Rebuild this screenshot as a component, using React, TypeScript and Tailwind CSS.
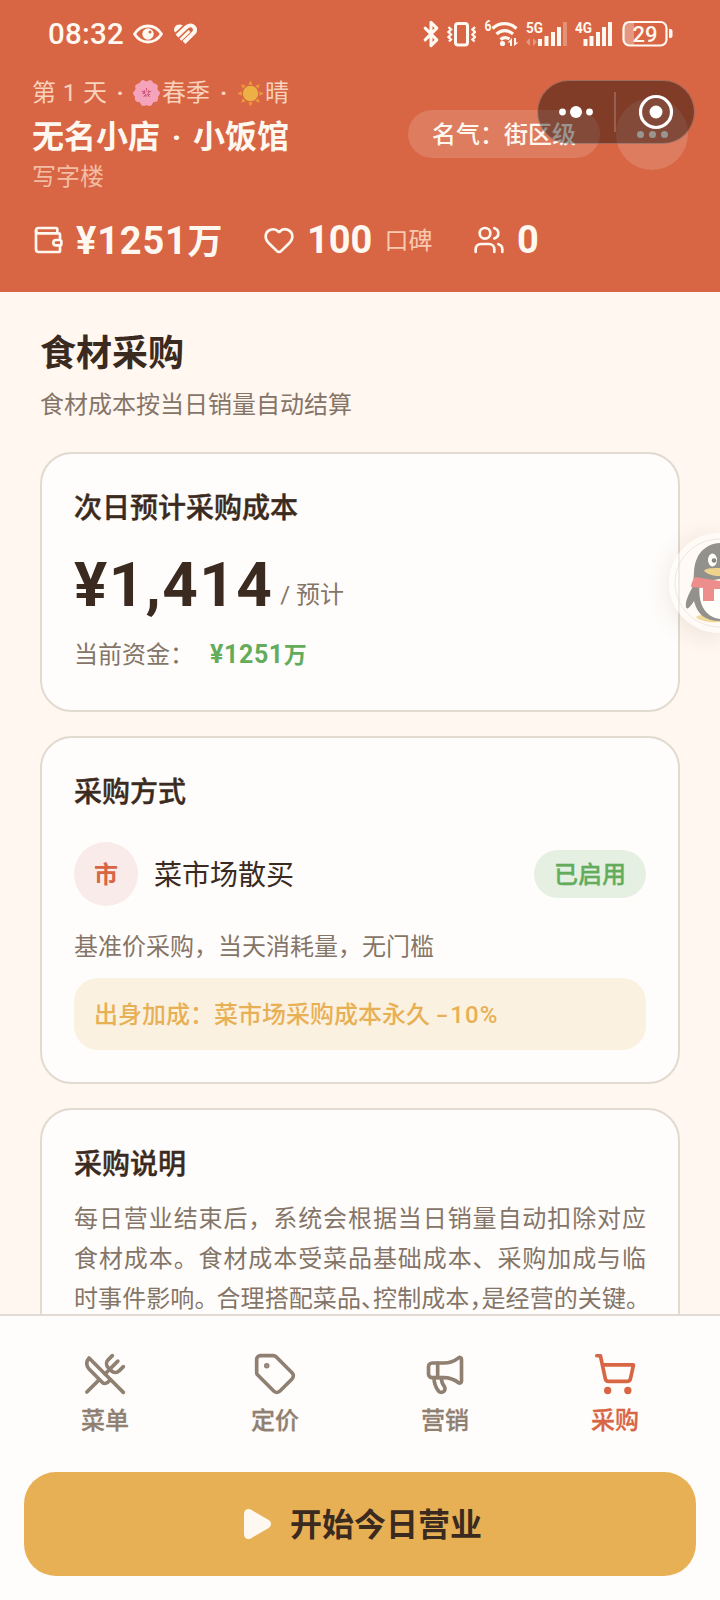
import type { ReactNode } from 'react';
import {
  Bluetooth,
  Heart,
  Megaphone,
  Play,
  ShoppingCart,
  Tag,
  Users,
  UtensilsCrossed,
  Wallet,
} from 'lucide-react';

function StatusBar() {
  return (
    <div className="flex h-[68px] items-center justify-between pl-12 pr-[46px] text-[#fff8f0]">
      <div className="flex items-center">
        <span className="w-[76px] whitespace-nowrap pt-px text-[29.5px] font-medium leading-none tracking-[0.2px]">08:32</span>
        <svg className="ml-2 h-6 w-[32px]" viewBox="0 0 32 24" fill="none">
          <path d="M2.5 12C6 6.5 10.5 4 16 4s10 2.500 13.500 8C26 17.500 21.500 20 16 20S6 17.500 2.500 12Z" stroke="currentColor" strokeWidth="2.800" strokeLinejoin="round" />
          <circle cx="16" cy="12" r="5.700" fill="currentColor" />
          <circle cx="18" cy="10" r="1.500" fill="#d86543" />
        </svg>
        <svg className="ml-2 h-6 w-[26px]" viewBox="0 0 26 24" fill="none" stroke="currentColor" strokeWidth="4">
          <path d="M2.200 9C1.500 6 3.500 2.500 7.500 2.500c1.300 0 2.400.4 3.300 1L3.300 10.500Z" fill="currentColor" stroke="none" />
          <path d="m5 14 9-8.500c3-2.800 6-2.500 7.800-.7 1.900 1.900 1.600 4.500-.3 6.400L12 20.500" />
          <path d="m8.500 17.800 9-8.800" strokeWidth="3" />
        </svg>
      </div>
      <div className="flex items-center">
        <Bluetooth className="-mr-px h-[30px] w-7 -translate-x-px" strokeWidth={2.600} />
        <svg className="ml-[1px] h-8 w-[30px]" viewBox="446 18 30 32" fill="none" stroke="currentColor" strokeWidth="2.400">
          <rect x="455.500" y="23.500" width="12" height="21.500" rx="2.500" strokeWidth="3" />
          <path d="m448.500 27 2.500 2.500-2.500 2.500 2.500 2.500-2.500 2.500 2.500 2.500-2 2M475 27l-2.500 2.500 2.500 2.500-2.500 2.500 2.500 2.500-2.500 2.500 2 2" />
        </svg>
        <svg className="ml-2 h-8 w-[35px]" viewBox="484 18 35 32" fill="none" stroke="currentColor" strokeWidth="3.200">
          <text x="484.500" y="31" fontSize="14" fontWeight="700" textLength="7" lengthAdjust="spacingAndGlyphs" fill="currentColor" stroke="none">6</text>
          <path d="M492.500 28.500c7-6.500 17-6.500 24 0M496.500 34c5-4.500 11.500-4.500 16.500 0M500.500 39.500c3-2.500 6-2.500 9-.5" />
          <circle cx="502.500" cy="43.500" r="2.600" fill="currentColor" stroke="none" />
          <path d="m512 38-4.500 4.500H510V46h2ZM514 38v8l4.500-3.500H516V38Z" fill="currentColor" stroke="none" />
        </svg>
        <svg className="ml-[7px] h-8 w-[42px]" viewBox="526 18 42 32" fill="currentColor">
          <text x="526" y="33" fontSize="15.500" fontWeight="700" textLength="17" lengthAdjust="spacingAndGlyphs">5G</text>
          <path opacity=".35" d="m530 38-4 4 4 4Zm3 0v8l4-4Z" />
          <path d="M538 39h4v7h-4ZM544.500 36h4v10h-4ZM551 32h4v14h-4ZM557 27h4v19h-4Z" />
          <path opacity=".3" d="M563 22h4v24h-4Z" />
        </svg>
        <svg className="ml-[7px] h-8 w-[38px]" viewBox="575 18 38 32" fill="currentColor">
          <text x="575" y="33" fontSize="15.500" fontWeight="700" textLength="17" lengthAdjust="spacingAndGlyphs">4G</text>
          <path d="M583.500 39h4v7h-4ZM589.500 36h4v10h-4ZM596 32h4v14h-4ZM602 27h4v19h-4ZM608 22h4v24h-4Z" />
        </svg>
        <svg className="ml-[8px] h-8 w-[53px]" viewBox="621 18 53 32" fill="none">
          <path d="M624 22h10v23h-8l-2-2Z" fill="currentColor" opacity=".35" />
          <rect x="623.500" y="22" width="43" height="23.500" rx="6" stroke="currentColor" strokeWidth="2.200" />
          <path d="M669 29h1.500q2 0 2 2v5q0 2-2 2H669Z" fill="currentColor" />
          <text x="645" y="41.500" fontSize="22" fontWeight="500" textAnchor="middle" textLength="25" fill="currentColor">29</text>
        </svg>
      </div>
    </div>
  );
}

function Blossom() {
  return (
    <svg className="h-[28px] w-[27px]" viewBox="-14 -14 28 28">
      {[0, 72, 144, 216, 288].map((angle) => (
        <g key={angle} transform={`rotate(${angle})`}>
          <path d="M0 0C-10-4-9-12-3.500-13.500L0-12l3.500-1.500C9-12 10-4 0 0Z" fill="#f4a3bb" />
          <path d="M0-1V-5M0-1l-2-2.500M0-1l2-2.500" stroke="#b8345c" strokeWidth=".8" />
        </g>
      ))}
      <circle r="1.500" fill="#f4a3bb" />
    </svg>
  );
}

function Sun() {
  return (
    <svg className="h-[27px] w-[27px]" viewBox="-14 -14 28 28">
      {[0, 45, 90, 135, 180, 225, 270, 315].map((angle) => (
        <path key={angle} d="m-2.300-9.200 2.300-4.400 2.300 4.400Z" fill="#ee9a3a" transform={`rotate(${angle})`} />
      ))}
      <circle r="8" fill="#ecb044" />
    </svg>
  );
}

function Header() {
  return (
    <header className="relative h-[292px] shrink-0 bg-[#d86543] text-[#fff8f0]">
      <StatusBar />
      <div className="flex items-start justify-between pl-8 pr-8">
        <div className="pt-[7px]">
          <div className="flex h-9 items-center whitespace-pre text-2xl text-[#f9d2bd]">
            <span className="flex w-[75px] justify-between"><span>第</span><span>1</span><span>天</span></span>
            <span className="w-[26px] text-center font-bold">·</span>
            <Blossom />
            <span className="ml-[2px]">春季</span>
            <span className="w-[27px] text-center font-bold">·</span>
            <Sun />
            <span className="ml-[1px]">晴</span>
          </div>
          <h1 className="flex h-[52px] items-center whitespace-pre text-[32px] font-bold">
            无名小店<span className="w-[33px] text-center">·</span>小饭馆
          </h1>
          <div className="flex h-7 items-center text-2xl text-[#f3bda5]">写字楼</div>
        </div>
        <div className="flex items-center gap-4 pt-[30px]">
          <div className="flex h-12 w-[192px] items-center rounded-full bg-white/15 pl-6 pt-0.5 text-2xl font-medium">名气：街区级</div>
          <div className="flex h-[72px] w-[72px] items-center justify-center gap-[5px] rounded-full bg-white/15">
            <i className="h-[7px] w-[7px] rounded-full bg-[#fff8f0]" />
            <i className="h-[7px] w-[7px] rounded-full bg-[#fff8f0]" />
            <i className="h-[7px] w-[7px] rounded-full bg-[#fff8f0]" />
          </div>
        </div>
      </div>
      <div className="mt-[21px] flex h-14 items-center pl-8 text-[38px] font-bold leading-none">
        <div className="flex w-[231px] items-center">
          <Wallet className="h-8 w-8" strokeWidth={2} />
          <span className="ml-3 whitespace-nowrap pt-px tracking-[0.8px]">¥1251<span className="text-[35px]">万</span></span>
        </div>
        <div className="flex w-[210px] items-center">
          <Heart className="h-8 w-8" strokeWidth={2} />
          <span className="ml-3">100</span>
          <span className="ml-3 pt-0.5 text-2xl font-normal text-[#f9c9b1]">口碑</span>
        </div>
        <div className="flex items-center">
          <Users className="h-8 w-8" strokeWidth={2} />
          <span className="ml-3">0</span>
        </div>
      </div>
      <div className="absolute left-[537px] top-[80px] flex h-[64px] w-[158px] items-center rounded-full border border-white/25 bg-black/40">
        <svg className="h-full w-full" viewBox="538 81 156 62" fill="none">
          <circle cx="562.500" cy="112" r="3.400" fill="#fff" />
          <circle cx="576" cy="112" r="6" fill="#fff" />
          <circle cx="589.500" cy="112" r="3.400" fill="#fff" />
          <path d="M615 92v40" stroke="#fff" strokeOpacity=".25" strokeWidth="1.500" />
          <circle cx="656" cy="112" r="15.500" stroke="#fff" strokeWidth="3.200" />
          <circle cx="656" cy="112" r="6.500" fill="#fff" />
        </svg>
      </div>
    </header>
  );
}

function Card({ title, children }: { title: string; children: ReactNode }) {
  return (
    <section className="rounded-[32px] border-2 border-[#e0dad1] bg-[#fffdfb] p-8">
      <h3 className="h-[42px] pt-0.5 text-[28px] font-medium leading-[42px] text-[#3b2a20] [-webkit-text-stroke:0.4px_currentColor]">{title}</h3>
      {children}
    </section>
  );
}

function Content() {
  return (
    <main className="min-h-0 flex-1 overflow-hidden px-10 pt-[35px]">
      <h2 className="text-[36px] font-bold leading-[54px] text-[#3b2a20]">食材采购</h2>
      <p className="mt-[6px] text-2xl leading-9 text-[#857568]">食材成本按当日销量自动结算</p>
      <div className="mt-[29px] flex flex-col gap-6">
        <Card title="次日预计采购成本">
          <div className="flex h-[102px] items-baseline pt-[21px]">
            <span className="text-[62px] font-bold leading-[72px] tracking-[1.400px] text-[#3b2a20]">¥1,414</span>
            <span className="relative -top-[3px] ml-[7px] whitespace-pre text-2xl text-[#857568]">/ 预计</span>
          </div>
          <div className="flex h-12 items-center pt-0.5 text-2xl text-[#857568]">
            <span className="w-[136px]">当前资金：</span>
            <span className="text-[25px] font-bold tracking-[0.600px] text-[#63ac5b]">¥1251<span className="text-[23px]">万</span></span>
          </div>
        </Card>
        <Card title="采购方式">
          <div className="mt-[30px] flex h-16 items-center">
            <div className="flex h-16 w-16 items-center justify-center rounded-full bg-[#f9ebe9] pt-0.5 text-2xl font-bold text-[#d86543]">市</div>
            <span className="ml-4 pt-[3px] text-[28px] text-[#3b2a20]">菜市场散买</span>
            <span className="ml-auto flex h-12 w-28 items-center justify-center rounded-3xl bg-[#e5f0e2] pt-0.5 text-2xl font-medium text-[#63ac5b] [-webkit-text-stroke:0.3px_currentColor]">已启用</span>
          </div>
          <p className="mt-[23px] text-2xl leading-9 text-[#857568]">基准价采购，当天消耗量，无门槛</p>
          <div className="mt-[13px] flex h-[72px] items-center rounded-3xl bg-[#fbf1e1] pl-5 pt-0.5 text-2xl font-medium text-[#e8b054]">
            <span className="whitespace-pre">出身加成：菜市场采购成本永久 </span>
            <span className="tracking-[1.1px]"><span className="mr-px inline-block origin-left scale-x-150 pr-1">-</span>10%</span>
          </div>
        </Card>
        <Card title="采购说明">
          <div className="mt-[15px] text-2xl leading-10 text-[#857568]">
            <p className="whitespace-nowrap [text-align-last:justify]">每日营业结束后，系统会根据当日销量自动扣除对应</p>
            <p className="whitespace-nowrap [text-align-last:justify]">食材成本。食材成本受菜品基础成本、采购加成与临</p>
            <p className="whitespace-nowrap tracking-[0.08px]">
              时事件影响<span className="-mr-0.5">。</span>合理搭配菜品<span className="[font-feature-settings:'halt']">、</span>控制成本<span className="[font-feature-settings:'halt']">，</span>是经营的关键。
            </p>
          </div>
        </Card>
      </div>
    </main>
  );
}

const tabs = [
  { label: '菜单', Icon: UtensilsCrossed, active: false },
  { label: '定价', Icon: Tag, active: false },
  { label: '营销', Icon: Megaphone, active: false },
  { label: '采购', Icon: ShoppingCart, active: true },
];

function BottomBar() {
  return (
    <footer className="flex h-[286px] shrink-0 flex-col border-t-2 border-[#e3dad3] bg-[#fffdfc]">
      <nav className="grid grid-cols-4 px-5 pt-9">
        {tabs.map(({ label, Icon, active }) => (
          <div key={label} className={`flex flex-col items-center ${active ? 'text-[#d86543]' : 'text-[#8f8071]'}`}>
            <Icon className="h-11 w-11" strokeWidth={2} />
            <span className="mt-[7px] text-2xl font-medium leading-9 [-webkit-text-stroke:0.3px_currentColor]">{label}</span>
          </div>
        ))}
      </nav>
      <button className="mx-6 mt-[33px] flex h-[104px] items-center justify-center gap-4 rounded-[32px] bg-[#e8b054] text-[32px] font-bold text-[#3b2a20]">
        <Play className="h-9 w-9" fill="#fff8f0" stroke="#fff8f0" strokeWidth={2} />
        <span className="pt-0.5">开始今日营业</span>
      </button>
    </footer>
  );
}

function FloatingPenguin() {
  return (
    <div className="absolute left-[669px] top-[533px] h-[100px] w-[51px] rounded-l-full bg-[#fffefa]/50 shadow-[0_4px_24px_rgba(80,60,40,0.12)]">
      <svg className="h-full w-full" viewBox="669 533 51 100" fill="none">
        <path d="M720 539c-25 0-45 20-45 44s20 44 45 44" stroke="#d9d6cd" strokeWidth="1" opacity=".5" />
        <path d="M696 617c4-3 10-3 24 0v5c-9 1-21-1-24-5Z" fill="#f0d99b" />
        <path d="M720 543c-16 1-25 12-26 29l-1 14c-4 8-8 15-7 21 1 4 5-1 8-6 3 13 11 20 26 20Z" fill="#93918c" />
        <path d="M700 582c-3 20 4 35 20 37v-40Z" fill="#fffefa" />
        <ellipse cx="712.500" cy="560" rx="4.500" ry="6.500" fill="#fffefa" />
        <circle cx="714" cy="560.500" r="2.300" fill="#858480" />
        <path d="M704 570.500c3-2.500 9-2.500 16-2.500v8c-7 0-14-2-16-5.500Z" fill="#efd28c" />
        <path d="m695 577 25 4v8h-6v12h-11v-13l-12-1c0-4 2-7 4-10Z" fill="#ed8e8c" />
      </svg>
    </div>
  );
}

export default function App() {
  return (
    <div className="relative flex h-[1600px] w-[720px] flex-col overflow-hidden bg-[#fff7f0] [font-family:Roboto,'Noto_Sans_CJK_SC',sans-serif]">
      <Header />
      <Content />
      <BottomBar />
      <FloatingPenguin />
    </div>
  );
}
